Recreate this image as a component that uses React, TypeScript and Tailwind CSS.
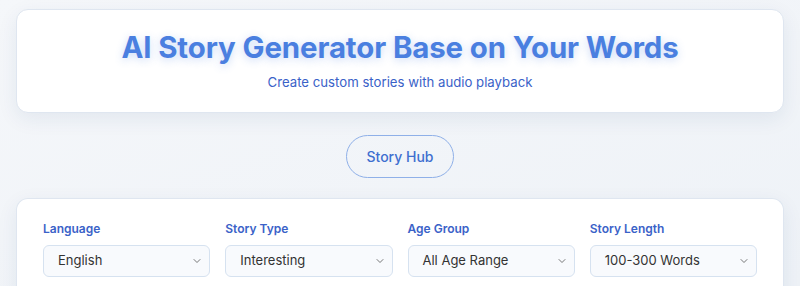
import { ChevronDown } from 'lucide-react'

const fields = [
  { label: 'Language', value: 'English' },
  { label: 'Story Type', value: 'Interesting' },
  { label: 'Age Group', value: 'All Age Range' },
  { label: 'Story Length', value: '100-300 Words' },
]

export default function App() {
  return (
    <div className="h-[286px] overflow-hidden bg-gradient-to-br from-[#f5f7fa] to-[#eef2f7] px-4 pt-[9px] font-['Inter',sans-serif]">
      <div className="mx-auto flex h-[104px] w-full flex-col items-center justify-center rounded-xl border border-[#dfe6f0] bg-white shadow-[0_6px_20px_rgba(30,60,110,0.08)]">
        <h1 className="text-[29.4px] leading-9 font-bold tracking-[-0.1px] text-[#4a7fe0] [text-shadow:0_2px_8px_rgba(74,127,224,0.3)]">
          AI Story Generator Base on Your Words
        </h1>
        <p className="mt-[7px] text-[13.2px] text-[#3a62c8]">
          Create custom stories with audio playback
        </p>
      </div>

      <div className="flex justify-center pt-[22px] pb-[20px]">
        <button className="h-[43px] w-[108px] rounded-full border border-[#8fb0e8] bg-transparent text-[14px] font-medium text-[#3f6fd0]">
          Story Hub
        </button>
      </div>

      <div className="rounded-t-xl border border-b-0 border-[#dfe6f0] bg-white px-[26px] pt-[21px] pb-6 shadow-[0_6px_20px_rgba(30,60,110,0.08)]">
        <div className="grid grid-cols-4 gap-[15px]">
          {fields.map((f) => (
            <div key={f.label} className="flex flex-col">
              <label className="mb-[7px] text-[12px] font-semibold text-[#3a62c8]">
                {f.label}
              </label>
              <div className="flex h-[32px] items-center justify-between rounded-md border border-[#d6e2f0] bg-[#f8fafd] pr-[6px] pl-[14px]">
                <span className="text-[13px] text-[#333]">{f.value}</span>
                <ChevronDown size={12} strokeWidth={1.6} className="text-[#555]" />
              </div>
            </div>
          ))}
        </div>
      </div>
    </div>
  )
}
